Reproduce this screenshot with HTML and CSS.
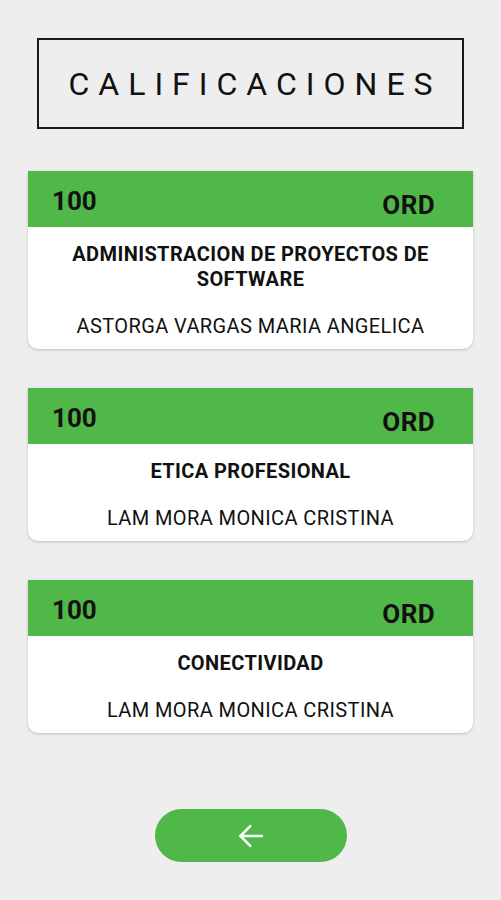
FILE: index.html
```html
<html>
<head>
  <title>Calificaciones</title>
  <link rel="stylesheet" href="styles.css">
</head>
<body>
  <div class="page">
    <div class="title-box">
      <h1 class="title">CALIFICACIONES</h1>
    </div>

    <div class="card">
      <div class="card-head">
        <span class="grade">100</span>
        <span class="type">ORD</span>
      </div>
      <div class="card-body">
        <div class="subject">ADMINISTRACION DE PROYECTOS DE SOFTWARE</div>
        <div class="teacher">ASTORGA VARGAS MARIA ANGELICA</div>
      </div>
    </div>

    <div class="card">
      <div class="card-head">
        <span class="grade">100</span>
        <span class="type">ORD</span>
      </div>
      <div class="card-body">
        <div class="subject">ETICA PROFESIONAL</div>
        <div class="teacher">LAM MORA MONICA CRISTINA</div>
      </div>
    </div>

    <div class="card">
      <div class="card-head">
        <span class="grade">100</span>
        <span class="type">ORD</span>
      </div>
      <div class="card-body">
        <div class="subject">CONECTIVIDAD</div>
        <div class="teacher">LAM MORA MONICA CRISTINA</div>
      </div>
    </div>

    <button class="back-btn">
      <svg width="30" height="30" viewBox="0 0 24 24" fill="none" stroke="white" stroke-width="2">
        <path d="M21.5 12H3.5M12 3.5l-8.5 8.5 8.5 8.5"/>
      </svg>
    </button>
  </div>
</body>
</html>
```

FILE: styles.css
```css
body {
    margin: 0;
    background-color: #eeeeee;
    font-family: Roboto, "Liberation Sans", sans-serif;
    color: #111111;
}

.page {
    width: 501px;
    display: flex;
    flex-direction: column;
    align-items: flex-start;
}

.title-box {
    margin: 38px 0 0 37px;
    width: 423px;
    height: 87px;
    border: 2px solid #1a1a1a;
    display: flex;
    align-items: center;
    justify-content: center;
}

.title {
    margin: 0;
    padding-left: 9px;
    font-size: 32px;
    font-weight: 400;
    letter-spacing: 9px;
}

.card {
    margin: 42px 0 0 28px;
    width: 445px;
    background-color: white;
    border-radius: 0 0 10px 10px;
    box-shadow: 0 1px 3px rgba(0, 0, 0, 0.2);
}

.card + .card {
    margin-top: 39px;
}

.card-head {
    height: 56px;
    box-sizing: border-box;
    padding: 15px 38px 0 24px;
    background-color: #50b848;
    display: flex;
    justify-content: space-between;
    align-items: flex-start;
    font-size: 26px;
    font-weight: 700;
    line-height: 30px;
}

.type {
    margin-top: 4px;
    letter-spacing: 0.4px;
}

.card-body {
    padding: 15px 16px 10px;
    text-align: center;
    font-size: 20px;
    line-height: 25px;
    letter-spacing: 0.4px;
}

.subject {
    font-weight: 700;
}

.teacher {
    margin-top: 22px;
}

.back-btn {
    margin: 76px 0 0 155px;
    width: 192px;
    height: 53px;
    border: none;
    border-radius: 27px;
    background-color: #50b848;
    display: flex;
    align-items: center;
    justify-content: center;
    padding: 0;
}
```
